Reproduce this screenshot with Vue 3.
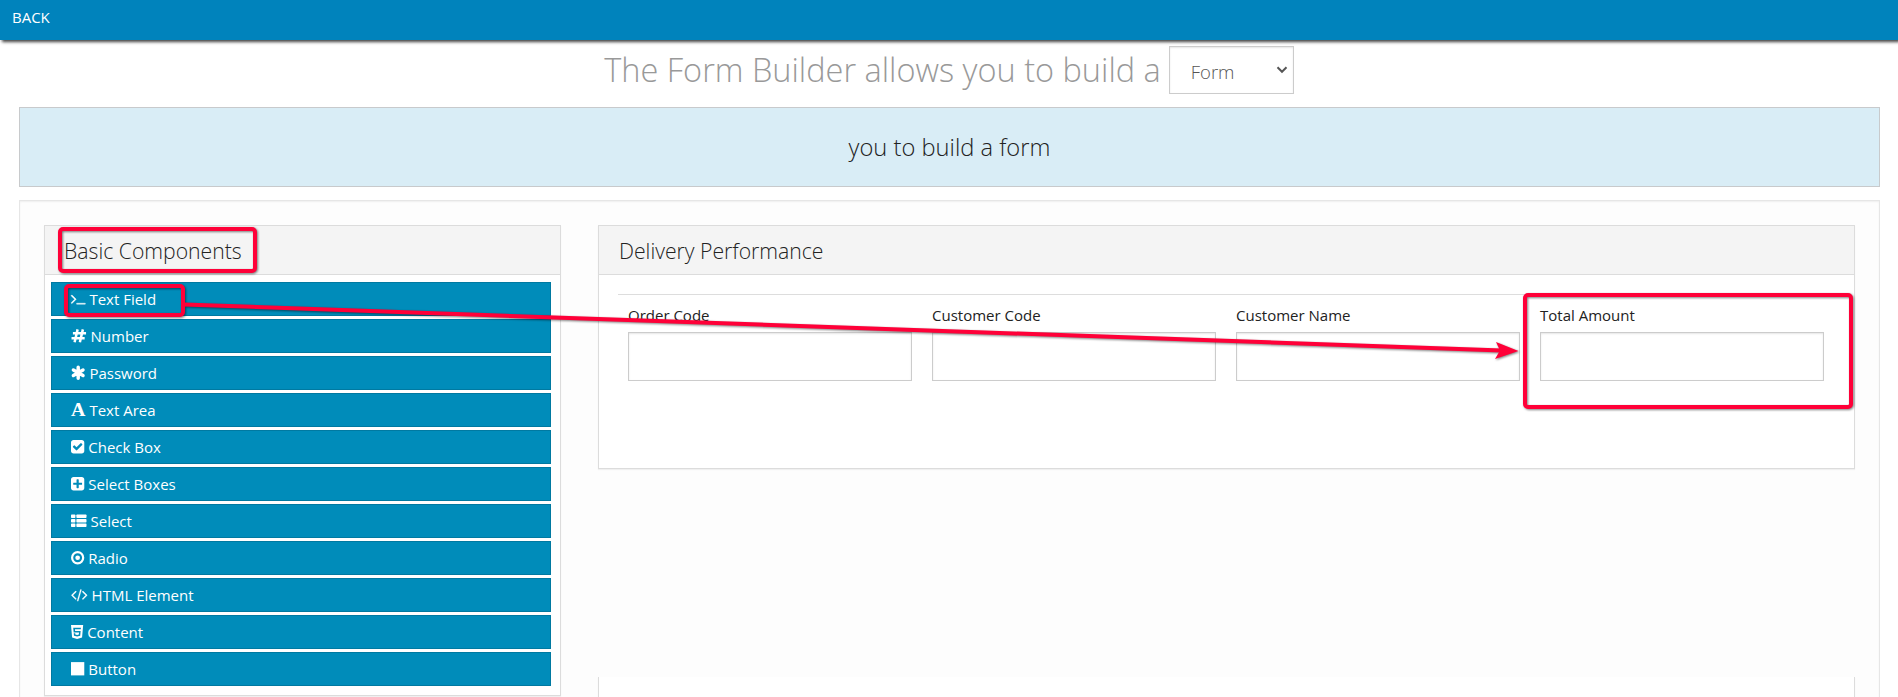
<script setup>
const components = [
  { icon: 'terminal', width: 1664, label: 'Text Field' },
  { icon: 'hashtag', width: 1792, label: 'Number' },
  { icon: 'asterisk', width: 1664, label: 'Password' },
  { icon: 'font', width: 1664, label: 'Text Area' },
  { icon: 'check', width: 1536, label: 'Check Box' },
  { icon: 'plus', width: 1536, label: 'Select Boxes' },
  { icon: 'list', width: 1792, label: 'Select' },
  { icon: 'radio', width: 1536, label: 'Radio' },
  { icon: 'code', width: 1920, label: 'HTML Element' },
  { icon: 'html5', width: 1408, label: 'Content' },
  { icon: 'square', width: 1536, label: 'Button' },
]
const fields = ['Order Code', 'Customer Code', 'Customer Name', 'Total Amount']
const viewBox = (w) => `${(1792 - w) / 2} 0 ${w} 1792`
const iconWidth = (w) => (w * 15.5) / 1792
</script>

<template>
  <div class="page">
    <header class="topbar"><a class="back">BACK</a></header>

    <div class="title-row">
      <h1 class="title">The Form Builder allows you to build a</h1>
      <div class="select">
        <span class="select-value">Form</span>
        <svg class="chevron" width="12" height="8" viewBox="0 0 12 8">
          <path d="M1.500 1.300 6 5.800 10.500 1.300" fill="none" stroke="#555" stroke-width="2" />
        </svg>
      </div>
    </div>

    <div class="banner">you to build a form</div>

    <main class="well">
      <section class="panel sidebar">
        <h2 class="panel-heading side-heading">Basic Components</h2>
        <ul class="items">
          <li v-for="c in components" :key="c.label" class="item">
            <svg class="icon" :width="iconWidth(c.width)" height="15.5" :viewBox="viewBox(c.width)" fill="#fff">
              <path v-if="c.icon === 'terminal'" stroke="#fff" stroke-width="40" d="M649 983l-466 466q-10 10-23 10t-23-10l-50-50q-10-10-10-23t10-23l393-393-393-393q-10-10-10-23t10-23l50-50q10-10 23-10t23 10l466 466q10 10 10 23t-10 23zm1079 457v64q0 14-9 23t-23 9h-960q-14 0-23-9t-9-23v-64q0-14 9-23t23-9h960q14 0 23 9t9 23z" />
              <path v-else-if="c.icon === 'hashtag'" d="M765 160 415 1640M1375 160 1025 1640M220 600H1740M60 1190H1580" fill="none" stroke="#fff" stroke-width="290" />
              <path v-else-if="c.icon === 'asterisk'" d="M896 270V1522M340 576 1452 1216M1452 576 340 1216" fill="none" stroke="#fff" stroke-width="400" stroke-linecap="round" />
              <text v-else-if="c.icon === 'font'" x="896" y="1640" text-anchor="middle" class="letter">A</text>
              <path v-else-if="c.icon === 'check'" d="M813 1299l614-614q19-19 19-45t-19-45l-102-102q-19-19-45-19t-45 19l-467 467-211-211q-19-19-45-19t-45 19l-102 102q-19 19-19 45t19 45l358 358q19 19 45 19t45-19zm851-883v960q0 119-84.500 203.500t-203.500 84.500h-960q-119 0-203.500-84.500t-84.500-203.500v-960q0-119 84.500-203.500t203.500-84.500h960q119 0 203.500 84.500t84.500 203.500z" />
              <path v-else-if="c.icon === 'plus'" d="M1408 960v-128q0-26-19-45t-45-19h-320v-320q0-26-19-45t-45-19h-128q-26 0-45 19t-19 45v320h-320q-26 0-45 19t-19 45v128q0 26 19 45t45 19h320v320q0 26 19 45t45 19h128q26 0 45-19t19-45v-320h320q26 0 45-19t19-45zm256-544v960q0 119-84.500 203.500t-203.500 84.500h-960q-119 0-203.500-84.500t-84.500-203.500v-960q0-119 84.500-203.500t203.500-84.500h960q119 0 203.500 84.500t84.500 203.500z" />
              <g v-else-if="c.icon === 'list'">
                <rect v-for="n in 3" :key="'a' + n" x="0" :y="n * 512 - 330" width="512" height="400" rx="80" />
                <rect v-for="n in 3" :key="'b' + n" x="620" :y="n * 512 - 330" width="1172" height="400" rx="80" />
              </g>
              <g v-else-if="c.icon === 'radio'">
                <circle cx="896" cy="896" r="640" fill="none" stroke="#fff" stroke-width="256" />
                <circle cx="896" cy="896" r="270" />
              </g>
              <path v-else-if="c.icon === 'code'" stroke="#fff" stroke-width="30" d="M553 1399l-50 50q-10 10-23 10t-23-10l-466-466q-10-10-10-23t10-23l466-466q10-10 23-10t23 10l50 50q10 10 10 23t-10 23l-393 393 393 393q10 10 10 23t-10 23zm591-1067l-373 1291q-4 13-15.500 19.500t-23.500 2.500l-62-17q-13-4-19.500-15.500t-2.500-24.500l373-1291q4-13 15.500-19.500t23.500-2.500l62 17q13 4 19.500 15.500t2.500 24.500zm657 651l-466 466q-10 10-23 10t-23-10l-50-50q-10-10-10-23t10-23l393-393-393-393q-10-10-10-23t10-23l50-50q10-10 23-10t23 10l466 466q10 10 10 23t-10 23z" />
              <path v-else-if="c.icon === 'html5'" fill-rule="evenodd" d="M192 128H1600L1472 1562 896 1724 320 1562ZM450 430 500 980H1120L1098 1210 896 1266 694 1210 680 1070H508L536 1346 896 1446 1256 1346 1306 806H668L652 606H1324L1340 430Z" />
              <rect v-else x="128" y="128" width="1536" height="1536" />
            </svg>
            <span class="label">{{ c.label }}</span>
          </li>
        </ul>
      </section>

      <div class="content">
        <section class="panel form-panel">
          <h2 class="panel-heading">Delivery Performance</h2>
          <hr class="rule" />
          <div class="fields">
            <label v-for="f in fields" :key="f" class="field">
              <span class="field-label">{{ f }}</span>
              <input class="field-input" type="text" />
            </label>
          </div>
        </section>
        <section class="panel next-panel"></section>
      </div>
    </main>

    <svg class="annotations" width="1898" height="697" viewBox="0 0 1898 697">
      <g fill="none" stroke="#ff0038" stroke-width="4">
        <rect x="60" y="229" width="195" height="42" rx="3" />
        <rect x="66" y="286" width="117" height="29" rx="3" />
        <rect x="1525" y="295" width="326" height="112" rx="3" />
        <path d="M184 304.500 1502 350.500" />
      </g>
      <path d="M1518.500 351 1495 359 1500 350.500 1496 342Z" fill="#ff0038" />
    </svg>
  </div>
</template>

<style>
html,
body {
  margin: 0;
  overflow: hidden;
}
</style>

<style scoped>
.page {
  position: relative;
  box-sizing: border-box;
  height: 697px;
  overflow: hidden;
  background: #fff;
  color: #222;
  font-family: 'Open Sans', 'Noto Sans', sans-serif;
}
.page * {
  box-sizing: border-box;
}
.topbar {
  height: 40px;
  padding: 6px 12px;
  background: #0083bc;
  box-shadow: 2px 2px 3px rgba(0, 0, 0, 0.75);
}
.back {
  display: block;
  color: #fff;
  font-size: 15px;
  line-height: 22px;
}
.title-row {
  display: flex;
  justify-content: center;
  gap: 8px;
  height: 67px;
  padding-top: 6px;
}
.title {
  margin: 0;
  color: #999;
  font-size: 32.5px;
  font-weight: 300;
  line-height: 48px;
  white-space: nowrap;
}
.select {
  display: flex;
  align-items: center;
  justify-content: space-between;
  width: 125px;
  height: 48px;
  padding: 3px 5px 0 21px;
  border: 1px solid #ccc;
  color: #555;
  box-shadow: inset 0 1px 2px rgba(0, 0, 0, 0.1);
  font-size: 18.5px;
  font-weight: 300;
}
.chevron {
  margin-top: -3px;
}
.banner {
  height: 80px;
  margin: 0 18px 0 19px;
  border: 1px solid #c8cacc;
  background: #d9edf6;
  font-size: 23.7px;
  font-weight: 300;
  line-height: 78px;
  text-align: center;
}
.well {
  display: flex;
  align-items: flex-start;
  gap: 37px;
  height: 520px;
  margin: 13px 18px 0 19px;
  padding: 24px;
  border: 1px solid #e6e6e6;
  background: #fdfdfd;
  box-shadow: inset 0 1px 2px rgba(0, 0, 0, 0.06);
}
.panel {
  border: 1px solid #dcdcdc;
  background: #fff;
  box-shadow: 0 1px 1px rgba(0, 0, 0, 0.05);
}
.sidebar {
  width: 517px;
  height: 471px;
}
.panel-heading {
  height: 49px;
  margin: 0;
  padding: 0 20px;
  border-bottom: 1px solid #dcdcdc;
  background: #f4f4f4;
  font-size: 21.2px;
  font-weight: 300;
  line-height: 50px;
}
.side-heading {
  padding-left: 19px;
}
.items {
  display: flex;
  flex-direction: column;
  gap: 3px;
  margin: 0;
  padding: 7px 9px 0 6px;
  list-style: none;
}
.item {
  display: flex;
  align-items: center;
  gap: 4px;
  height: 34px;
  padding-left: 19px;
  border: 1px solid #0079a1;
  background: #008cba;
  color: #fff;
  font-size: 15px;
  line-height: 20px;
}
.icon {
  flex: none;
  overflow: visible;
}
.letter {
  font-family: 'Liberation Serif', serif;
  font-size: 2300px;
  font-weight: 700;
}
.content {
  width: 1257px;
}
.form-panel {
  height: 244px;
}
.rule {
  height: 1px;
  margin: 19px 19px 0;
  border: 0;
  background: #ddd;
}
.fields {
  display: grid;
  grid-template-columns: repeat(4, 284px);
  gap: 20px;
  padding: 9px 29px 0;
}
.field-label {
  display: block;
  height: 28px;
  font-size: 15px;
  line-height: 22px;
}
.field-input {
  display: block;
  width: 284px;
  height: 49px;
  border: 1px solid #ccc;
  border-radius: 0;
  outline: none;
  background: #fff;
  box-shadow: inset 0 1px 2px rgba(0, 0, 0, 0.1);
}
.next-panel {
  height: 80px;
  margin-top: 208px;
  border-top: 0;
}
.annotations {
  position: absolute;
  top: 0;
  left: 0;
  filter: drop-shadow(1px 1px 1px rgba(0, 0, 0, 0.5));
}
</style>
